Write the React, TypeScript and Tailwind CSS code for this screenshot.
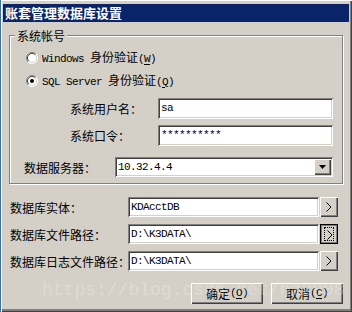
import React from "react";

const sunken =
  "bg-white shadow-[inset_1px_1px_#808080,inset_-1px_-1px_#fff,inset_2px_2px_#404040,inset_-2px_-2px_#d4d0c8]";
const raised =
  "bg-[#d4d0c8] shadow-[inset_1px_1px_#fff,inset_-1px_-1px_#404040,inset_-2px_-2px_#808080]";
const mono = "font-['Liberation_Mono',monospace] text-[11px] tracking-[-0.6px]";

function M({ children }: { children: React.ReactNode }) {
  return <span className={mono}>{children}</span>;
}

function Radio({ checked }: { checked?: boolean }) {
  // classic sunken radio circle
  return (
    <svg width="12" height="12" viewBox="0 0 12 12" className="shrink-0">
      <circle cx="6" cy="6" r="5.5" fill="#fff" />
      <path d="M2.1 9.9 A5.5 5.5 0 0 1 9.9 2.1" fill="none" stroke="#808080" />
      <path d="M9.9 2.1 A5.5 5.5 0 0 1 2.1 9.9" fill="none" stroke="#fff" />
      <path d="M2.8 9.2 A4.5 4.5 0 0 1 9.2 2.8" fill="none" stroke="#404040" />
      <path d="M9.2 2.8 A4.5 4.5 0 0 1 2.8 9.2" fill="none" stroke="#d4d0c8" />
      {checked && <circle cx="6" cy="6" r="2" fill="#000" />}
    </svg>
  );
}

function Chevron() {
  return (
    <svg width="6" height="10" viewBox="0 0 6 10">
      <polyline points="0.5,0.5 5,5 0.5,9.5" fill="none" stroke="#000" strokeWidth="1" />
    </svg>
  );
}

function ArrowButton({ pressed }: { pressed?: boolean }) {
  if (pressed) {
    return (
      <div className="ml-[1px] w-[18px] h-[20px] border border-black bg-[#d4d0c8] shadow-[inset_1px_1px_#808080,inset_-1px_-1px_#808080] flex items-center justify-center">
        <div className="w-[10px] h-[14px] border border-dotted border-black flex items-center justify-center pl-[1px] pt-[1px]">
          <Chevron />
        </div>
      </div>
    );
  }
  return (
    <div className={`ml-[1px] w-[18px] h-[20px] ${raised} flex items-center justify-center`}>
      <Chevron />
    </div>
  );
}

function PathRow({ label, value, pressed }: { label: string; value: string; pressed?: boolean }) {
  return (
    <div className="flex items-center h-[20px] pl-[7px]">
      <div className="w-[118px] shrink-0 whitespace-nowrap">{label}</div>
      <div className={`relative w-[191px] h-[20px] ${sunken} flex items-center pl-[3px]`}>
        <M>{value}</M>
      </div>
      <ArrowButton pressed={pressed} />
    </div>
  );
}

export default function App() {
  return (
    <div className="relative w-[352px] h-[312px] overflow-hidden bg-[#d4d0c8] text-black text-[12px] leading-[15px] font-['Noto_Sans_CJK_SC','Noto_Sans_CJK_JP',sans-serif] shadow-[inset_1px_0_#3a6ea5,inset_2px_1px_#fff,inset_-1px_-1px_#404040,inset_-2px_-3px_#808080] pt-[4px] px-[3px]">
      {/* Title bar */}
      <div className="h-[18px] bg-[#0a246a] text-white font-bold text-[13px] leading-[18px] pl-[2px]">
        账套管理数据库设置
      </div>

      {/* Account group */}
      <fieldset className="mt-[6px] ml-[6px] w-[334px] border border-[#808080] shadow-[1px_1px_0_#fff,inset_1px_1px_0_#fff] pb-[6px] min-w-0 p-0">
        <legend className="ml-[5px] px-[2px] bg-[#d4d0c8] leading-[15px]">系统帐号</legend>

        <div className="mt-[7px] flex items-center h-[15px] pl-[16px] gap-[4px]">
          <Radio />
          <span>
            <M>Windows </M>身份验证<M>(<span className="underline underline-offset-2">W</span>)</M>
          </span>
        </div>
        <div className="mt-[8px] flex items-center h-[15px] pl-[16px] gap-[4px]">
          <Radio checked />
          <span>
            <M>SQL Server </M>身份验证<M>(<span className="underline underline-offset-2">Q</span>)</M>
          </span>
        </div>

        <div className="mt-[10px] flex items-center pl-[60px]">
          <div className="w-[88px] shrink-0">系统用户名：</div>
          <div className={`w-[175px] h-[21px] ${sunken} flex items-center pl-[3px]`}>
            <M>sa</M>
          </div>
        </div>
        <div className="mt-[6px] flex items-center pl-[60px]">
          <div className="w-[88px] shrink-0">系统口令：</div>
          <div className={`w-[175px] h-[21px] ${sunken} flex items-center pl-[3px]`}>
            <M>**********</M>
          </div>
        </div>

        <div className="mt-[11px] flex items-center pl-[14px]">
          <div className="w-[91px] shrink-0">数据服务器：</div>
          <div className={`w-[218px] h-[20px] ${sunken} flex items-center pl-[3px] pr-[2px]`}>
            <M>10.32.4.4</M>
            <div className={`ml-auto w-[17px] h-[16px] ${raised} flex items-center justify-center`}>
              <svg width="7" height="4" viewBox="0 0 7 4">
                <polygon points="0,0 7,0 3.5,4" fill="#000" />
              </svg>
            </div>
          </div>
        </div>
      </fieldset>

      {/* Database paths */}
      <div className="mt-[13px] flex flex-col gap-[7px]">
        <PathRow label="数据库实体：" value="KDAcctDB" />
        <PathRow label="数据库文件路径：" value="D:\K3DATA\" pressed />
        <PathRow label="数据库日志文件路径：" value="D:\K3DATA\" />
      </div>

      {/* Dialog buttons */}
      <div className="mt-[12px] flex justify-end gap-[8px] pr-[6px]">
        <div className={`w-[72px] h-[21px] ${raised} flex items-center justify-center`}>
          确定<M>(<span className="underline underline-offset-2">O</span>)</M>
        </div>
        <div className={`w-[72px] h-[21px] ${raised} flex items-center justify-center`}>
          取消<M>(<span className="underline underline-offset-2">C</span>)</M>
        </div>
      </div>

      {/* Watermark */}
      <div className="pointer-events-none absolute left-[42px] top-[281px] font-['Liberation_Mono',monospace] text-[18px] leading-[18px] text-white/25 whitespace-nowrap">
        https://blog.csdn.net/hz2008
      </div>
    </div>
  );
}
